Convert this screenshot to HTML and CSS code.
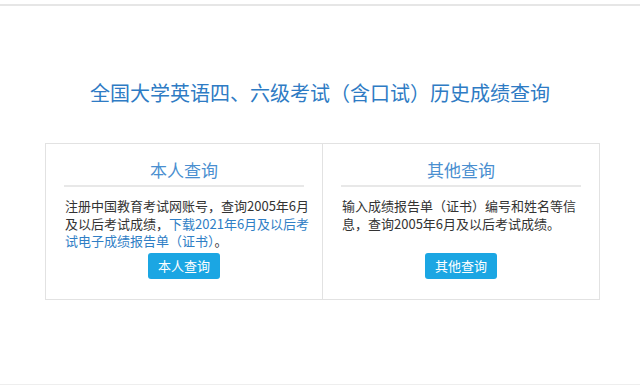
FILE: index.html
```html
<!DOCTYPE html>
<html lang="zh-CN">
<head>
  <meta charset="UTF-8">
  <meta name="viewport" content="width=device-width, initial-scale=1.0">
  <title>全国大学英语四、六级考试（含口试）历史成绩查询</title>
  <link rel="stylesheet" href="styles.css">
</head>
<body>
  <div class="top-line"></div>

  <h1 class="page-title">全国大学英语四、六级考试（含口试）历史成绩查询</h1>

  <div class="query-box">
    <!-- 本人查询 -->
    <div class="query-card">
      <div class="card-title">本人查询</div>
      <p class="card-desc">注册中国教育考试网账号，查询2005年6月及以后考试成绩，<a href="#">下载2021年6月及以后考试电子成绩报告单（证书）</a>。</p>
      <div class="card-action">
        <a class="btn" href="#">本人查询</a>
      </div>
    </div>

    <!-- 其他查询 -->
    <div class="query-card">
      <div class="card-title">其他查询</div>
      <p class="card-desc">输入成绩报告单（证书）编号和姓名等信息，查询2005年6月及以后考试成绩。</p>
      <div class="card-action">
        <a class="btn" href="#">其他查询</a>
      </div>
    </div>
  </div>

  <div class="bottom-line"></div>
</body>
</html>
```

FILE: styles.css
```css
html, body {
  margin: 0;
  padding: 0;
  background-color: #fff;
  font-family: 'Noto Sans CJK SC', 'Noto Sans', sans-serif;
  color: #333;
}

.top-line {
  margin-top: 4px;
  height: 2px;
  background-color: #e6e6e6;
}

.page-title {
  margin: 73px 0 36px;
  font-size: 20px;
  line-height: 28px;
  font-weight: normal;
  text-align: center;
  color: #2e7bc4;
}

.query-box {
  display: flex;
  width: 555px;
  margin-left: 45px;
  border: 1px solid #e2e2e2;
  box-sizing: border-box;
}

.query-card {
  flex: 1;
  padding: 14px 18px 20px;
}

.query-card + .query-card {
  border-left: 1px solid #e2e2e2;
}

.card-title {
  font-size: 17px;
  line-height: 24px;
  padding-bottom: 3px;
  text-align: center;
  color: #4a8fd0;
  border-bottom: 2px solid #e8e8e8;
}

.card-desc {
  margin: 10px -8px 0 1px;
  min-height: 52.5px;
  font-size: 13px;
  line-height: 17.5px;
}

.card-desc a {
  color: #2f7ec5;
  text-decoration: none;
}

.card-action {
  text-align: center;
  margin-top: 2px;
}

.btn {
  display: inline-block;
  height: 26px;
  line-height: 26px;
  padding: 0 10px;
  font-size: 13px;
  color: #fff;
  background-color: #1ba6e3;
  border-radius: 3px;
  text-decoration: none;
}

.bottom-line {
  margin-top: 84px;
  height: 1px;
  background-color: #eee;
}
```
